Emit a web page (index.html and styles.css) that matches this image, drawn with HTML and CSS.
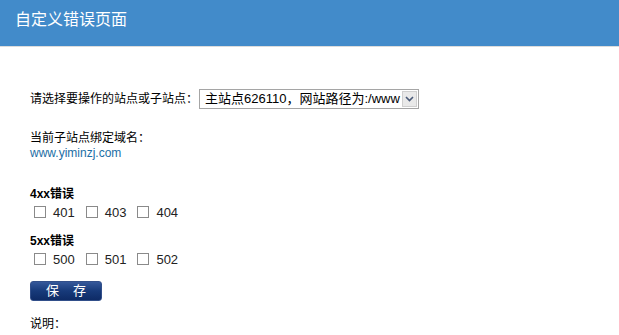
FILE: index.html
```html
<!DOCTYPE html>
<html lang="zh-CN">
<head>
<meta charset="utf-8">
<title>自定义错误页面</title>
<link rel="stylesheet" href="styles.css">
</head>
<body>
<div class="header"><h1 class="title">自定义错误页面</h1></div>
<div class="content">
  <div class="site-row">
    <span class="label">请选择要操作的站点或子站点：</span>
    <div class="select-wrap">
      <select class="site-select"><option>主站点626110，网站路径为:/www</option></select>
      <span class="arrow"><svg width="9" height="6" viewBox="0 0 9 6"><path d="M1 1 L4.5 4.5 L8 1" fill="none" stroke="#4a5a78" stroke-width="1.6"/></svg></span>
    </div>
  </div>
  <div class="domain">
    <div>当前子站点绑定域名：</div>
    <a class="link" href="#">www.yiminzj.com</a>
  </div>
  <div class="group g4">
    <div class="group-title">4xx错误</div>
    <div class="checks">
      <label class="check"><input type="checkbox" class="cb">401</label>
      <label class="check"><input type="checkbox" class="cb">403</label>
      <label class="check"><input type="checkbox" class="cb">404</label>
    </div>
  </div>
  <div class="group g5">
    <div class="group-title">5xx错误</div>
    <div class="checks">
      <label class="check"><input type="checkbox" class="cb">500</label>
      <label class="check"><input type="checkbox" class="cb">501</label>
      <label class="check"><input type="checkbox" class="cb">502</label>
    </div>
  </div>
  <button class="save" type="button">保<span class="sp"></span>存</button>
  <div class="note">说明：</div>
</div>
</body>
</html>
```
FILE: styles.css
```css
html, body { margin: 0; padding: 0; background: #fff; }
body {
  font-family: "Liberation Sans", "Noto Sans CJK SC", sans-serif;
  font-size: 12px;
  color: #000;
}
.header {
  height: 46px;
  background: #428bca;
  border-bottom: 1px solid #dcdcdc;
  box-sizing: content-box;
}
.title {
  margin: 0;
  padding: 10px 0 0 15px;
  font-size: 16px;
  line-height: 20px;
  font-weight: normal;
  color: #fff;
}
.content { padding: 42px 0 0 30px; }
.site-row { display: flex; align-items: center; height: 20px; }
.label { line-height: 20px; width: 169px; }
.select-wrap {
  display: flex;
  width: 220px;
  height: 20px;
  box-sizing: border-box;
  border: 1px solid #a5a5a5;
  background: #fff;
}
.site-select {
  appearance: none;
  -webkit-appearance: none;
  border: 0;
  outline: 0;
  background: transparent;
  flex: 1;
  min-width: 0;
  padding: 0 0 0 5px;
  margin: 0;
  font-family: "Liberation Sans", "Noto Sans CJK SC", sans-serif;
  font-size: 13px;
  color: #000;
  height: 18px;
  line-height: 18px;
}
.arrow {
  width: 15px;
  height: 16px;
  margin: 1px 1px 1px 0;
  box-sizing: border-box;
  border: 1px solid #cfcfcf;
  background: #e9e9e9;
  display: flex;
  align-items: center;
  justify-content: center;
}
.domain { margin-top: 22px; line-height: 15px; }
.link { color: #1b6ea5; text-decoration: none; }
.g4 { margin-top: 26px; }
.g5 { margin-top: 13px; }
.group-title { font-weight: bold; line-height: 15px; }
.checks { display: flex; height: 18px; align-items: center; margin-top: 1px; }
.check { display: flex; align-items: center; font-size: 13px; color: #222; margin-right: 7px; }
.cb {
  appearance: none;
  -webkit-appearance: none;
  width: 12px;
  height: 12px;
  margin: 0 7px 0 4px;
  border: 1px solid #8a8a8a;
  background: #fff;
  box-sizing: border-box;
}
.save {
  display: block;
  margin-top: 13px;
  width: 72px;
  height: 20px;
  padding: 0;
  border: 1px solid #324f8a;
  border-radius: 3px;
  background: linear-gradient(#35589a, #173a7a 50%, #0e2b66);
  color: #fff;
  font-family: "Liberation Sans", "Noto Sans CJK SC", sans-serif;
  font-size: 13px;
  line-height: 18px;
}
.sp { display: inline-block; width: 14px; }
.note { margin-top: 16px; line-height: 15px; }
```
